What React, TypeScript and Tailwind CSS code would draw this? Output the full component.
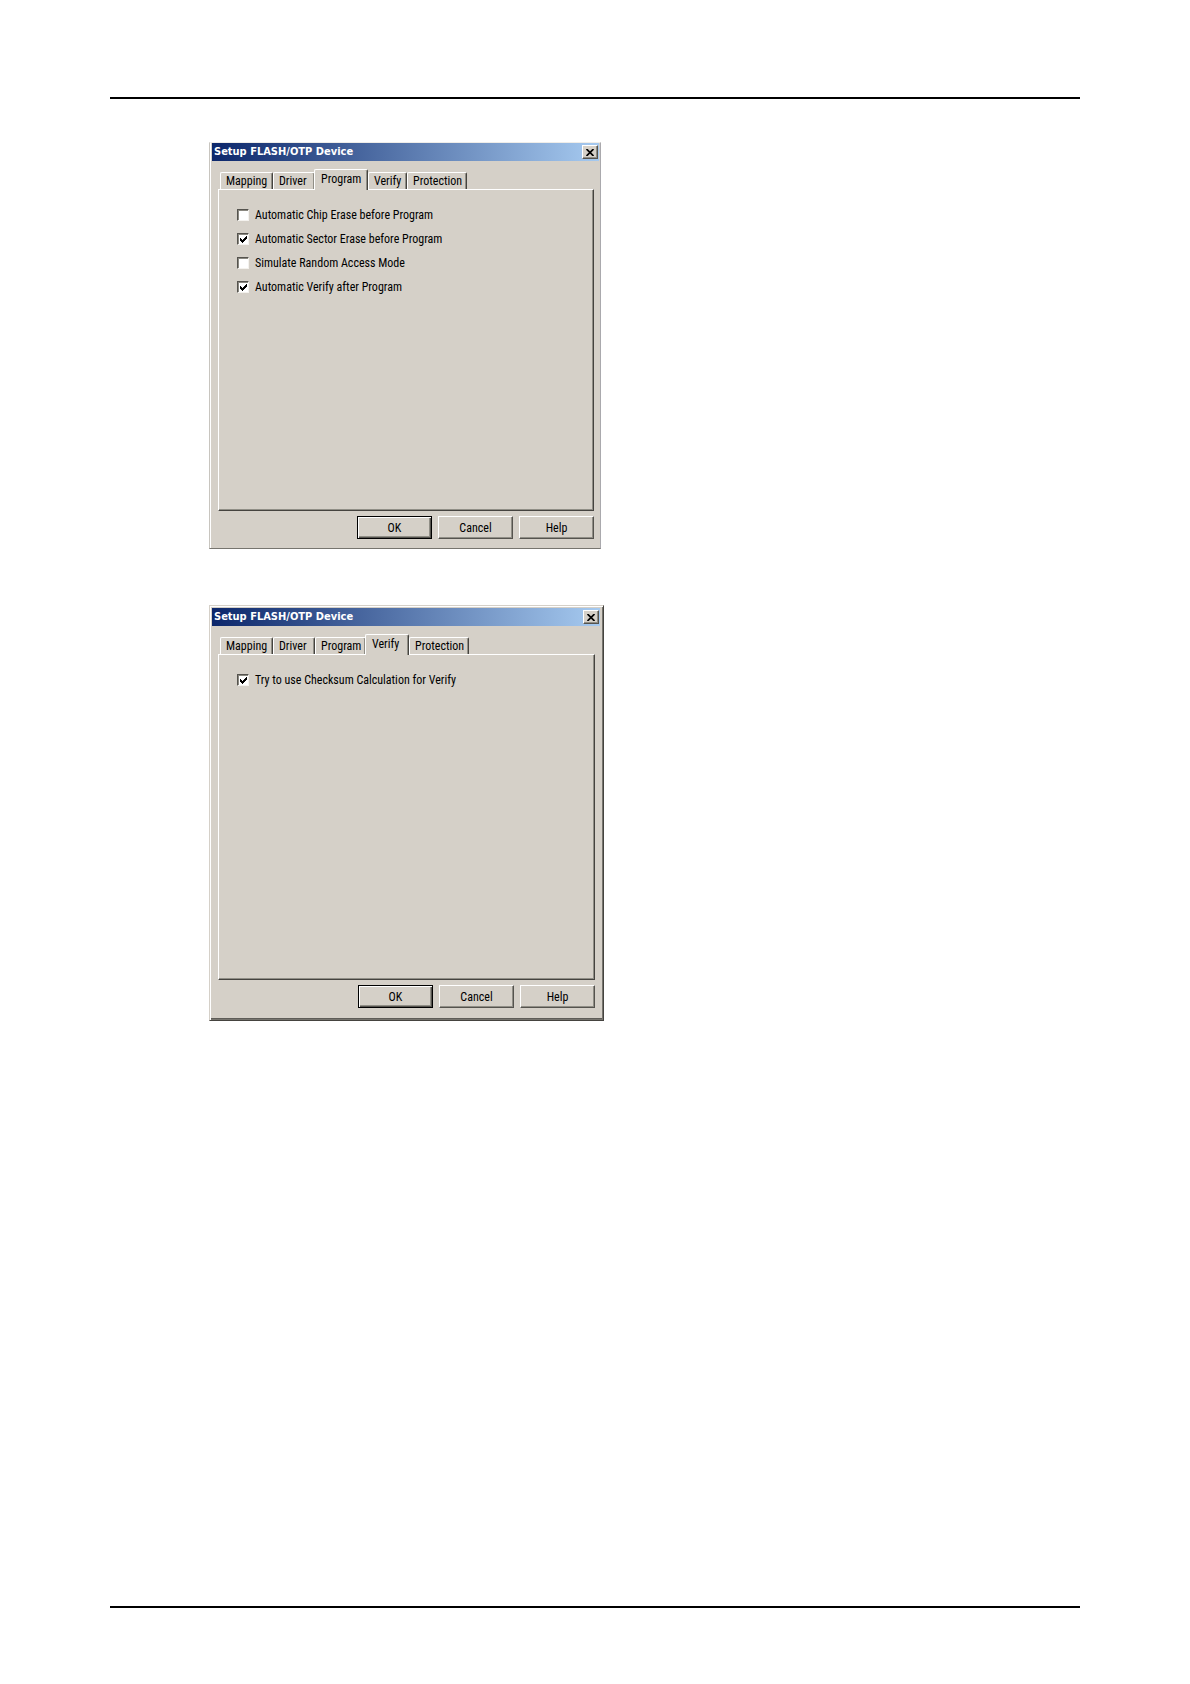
import { useState } from "react";
import clsx from "clsx";

type Option = {
  id: string;
  label: string;
  checked: boolean;
};

type DialogProps = {
  name: string;
  initialTab: string;
  options: Option[];
  className: string;
  titleClassName: string;
  panelClassName: string;
  footerClassName: string;
};

const tabs = [
  { label: "Mapping", width: "w-[53px]", activeWidth: "w-[57px]" },
  { label: "Driver", width: "w-[42px]", activeWidth: "w-[46px]" },
  { label: "Program", width: "w-[51px]", activeWidth: "w-[54px]" },
  { label: "Verify", width: "w-[39px]", activeWidth: "w-[44px]" },
  { label: "Protection", width: "w-[60px]", activeWidth: "w-[64px]" }
];

const programOptions: Option[] = [
  { id: "chip-erase", label: "Automatic Chip Erase before Program", checked: false },
  { id: "sector-erase", label: "Automatic Sector Erase before Program", checked: true },
  { id: "random-access", label: "Simulate Random Access Mode", checked: false },
  { id: "auto-verify", label: "Automatic Verify after Program", checked: true }
];

const verifyOptions: Option[] = [
  { id: "checksum", label: "Try to use Checksum Calculation for Verify", checked: true }
];

function CheckRow({ option }: { option: Option }) {
  return (
    <div className="flex h-3 items-center gap-[6px]">
      <span className="relative flex size-3 shrink-0">
        <input
          id={option.id}
          type="checkbox"
          defaultChecked={option.checked}
          className="peer size-3 appearance-none border border-t-[#55534e] border-r-[#f4f2ee] border-b-[#f4f2ee] border-l-[#55534e] bg-white shadow-[inset_1px_1px_0_#8a8880]"
        />
        <svg
          viewBox="0 0 12 12"
          className="pointer-events-none absolute inset-0 hidden size-3 peer-checked:block"
          shapeRendering="crispEdges"
        >
          <path d="M3 5h1v1h1v1h1v-1h1v-1h1v-1h1v-1h1v3h-1v1h-1v1h-1v1h-1v1h-1v-1h-1v-1h-1z" fill="#000" />
        </svg>
      </span>
      <label htmlFor={option.id} className="whitespace-nowrap">
        {option.label}
      </label>
    </div>
  );
}

function DialogButton({ label, primary }: { label: string; primary?: boolean }) {
  return (
    <button
      type="button"
      className={clsx(
        "h-[23px] w-[75px] border bg-[#d5d0c8]",
        primary
          ? "border-black shadow-[inset_1px_1px_0_#fff,inset_-1px_-1px_0_#55534e,inset_-2px_-2px_0_#908e86]"
          : "border-t-white border-r-[#55534e] border-b-[#55534e] border-l-white shadow-[inset_-1px_-1px_0_#908e86]"
      )}
    >
      {label}
    </button>
  );
}

function SetupDialog({
  name,
  initialTab,
  options,
  className,
  titleClassName,
  panelClassName,
  footerClassName
}: DialogProps) {
  const [active, setActive] = useState(initialTab);

  return (
    <section
      aria-labelledby={name}
      className={clsx("flex flex-col bg-[#d5d0c8] font-['Roboto_Condensed','Liberation_Sans',sans-serif] text-[12px] leading-3 text-black", className)}
    >
      <header
        className={clsx(
          "flex h-[18px] items-center justify-between bg-linear-to-r/srgb from-[#0c276b] to-[#a6caf0] pr-px pl-[2px]",
          titleClassName
        )}
      >
        <h2 id={name} className="font-['DejaVu_Sans_Condensed','DejaVu_Sans',sans-serif] text-[11px] leading-4 font-bold text-white">
          Setup FLASH/OTP Device
        </h2>
        <button
          type="button"
          aria-label="Close"
          className="flex h-[14px] w-4 items-center justify-center border border-t-white border-r-[#55534e] border-b-[#55534e] border-l-white bg-[#d5d0c8] shadow-[inset_-1px_-1px_0_#908e86]"
        >
          <svg viewBox="0 0 8 7" className="h-[7px] w-2" stroke="#000" strokeWidth="1.7">
            <path d="M0.5 0L7.5 7M7.5 0L0.5 7" />
          </svg>
        </button>
      </header>

      <div role="tablist" className="mt-2 flex h-5 items-end pl-[10px]">
        {tabs.map((tab) => (
          <button
            key={tab.label}
            type="button"
            role="tab"
            aria-selected={active === tab.label}
            onClick={() => setActive(tab.label)}
            className={clsx(
              "shrink-0 rounded-t-[2px] border-t border-r border-l border-t-white border-r-[#45433f] border-l-white bg-[#d5d0c8] text-left shadow-[inset_-1px_0_0_#908e86]",
              active === tab.label
                ? clsx("z-10 -mb-px -ml-px h-[21px] pb-[2px] pl-[6px]", tab.activeWidth)
                : clsx("h-[17px] pl-[5px]", tab.width)
            )}
          >
            {tab.label}
          </button>
        ))}
      </div>

      <div
        role="tabpanel"
        aria-label={active}
        className={clsx(
          "ml-2 border border-t-white border-r-[#45433f] border-b-[#45433f] border-l-white pt-[19px] shadow-[inset_-1px_-1px_0_#908e86]",
          panelClassName
        )}
      >
        {active === initialTab && (
          <div className="flex flex-col gap-3 pl-[18px]">
            {options.map((option) => (
              <CheckRow key={option.id} option={option} />
            ))}
          </div>
        )}
      </div>

      <footer className={clsx("mt-[5px] flex justify-end gap-[6px]", footerClassName)}>
        <DialogButton label="OK" primary />
        <DialogButton label="Cancel" />
        <DialogButton label="Help" />
      </footer>
    </section>
  );
}

export default function App() {
  return (
    <div className="flex min-h-screen flex-col bg-white px-[110px] pt-[97px] pb-[76px]">
      <hr className="border-t-2 border-black" />
      <main className="flex flex-col items-start pt-[43px] pl-[99px]">
        <SetupDialog
          name="program-setup"
          initialTab="Program"
          options={programOptions}
          className="w-[392px] border border-t-[#efede9] border-r-[#aaa9ad] border-b-[#77756f] border-l-[#c8c5bf] pb-[9px] shadow-[inset_1px_0_0_#fff]"
          titleClassName="mr-px ml-[2px]"
          panelClassName="mr-[6px] h-[322px]"
          footerClassName="mr-[6px]"
        />
        <SetupDialog
          name="verify-setup"
          initialTab="Verify"
          options={verifyOptions}
          className="mt-14 w-[395px] border border-t-[#d5d0c8] border-r-[#45433f] border-b-[#45433f] border-l-[#d5d0c8] pt-[2px] pb-3 shadow-[inset_1px_1px_0_#fff,inset_-1px_-1px_0_#77756f,inset_-1px_-2px_0_#5f5d58]"
          titleClassName="mr-[3px] ml-[2px]"
          panelClassName="mr-2 h-[326px]"
          footerClassName="mr-2"
        />
      </main>
      <hr className="mt-auto border-t-2 border-black" />
    </div>
  );
}
